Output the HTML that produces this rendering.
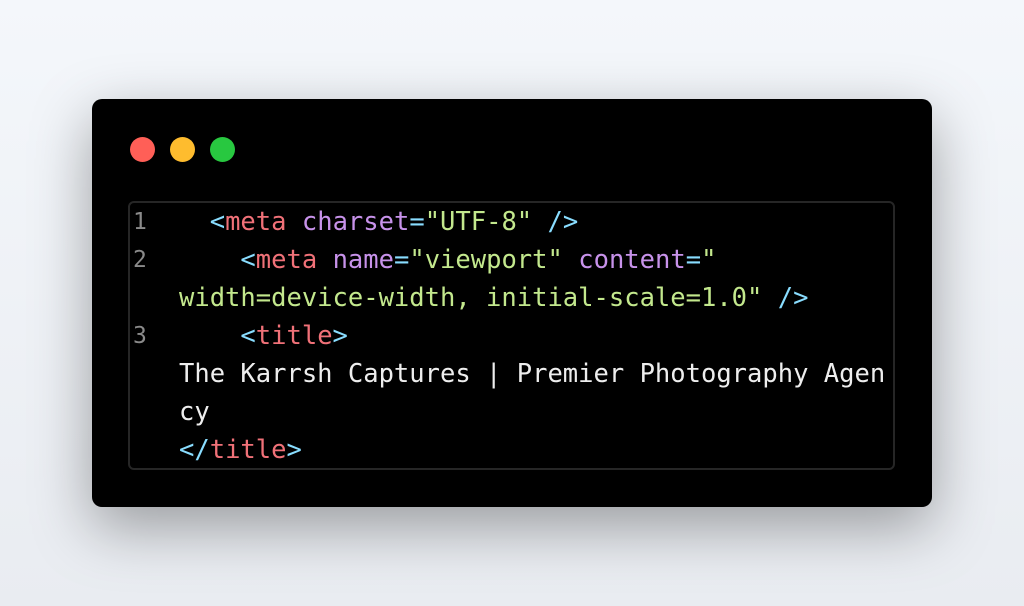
<!DOCTYPE html>
<html><head><style>
html,body{margin:0;padding:0;width:1024px;height:606px;overflow:hidden;background:linear-gradient(180deg,#f4f7fb,#e9ecf1);}
.card{position:absolute;left:92px;top:99px;width:840px;height:408px;background:#000;border-radius:10px;box-shadow:0 20px 60px rgba(0,0,0,.35);}
.dot{position:absolute;top:137px;width:25px;height:25px;border-radius:50%;}
.box{position:absolute;left:128px;top:201px;width:763px;height:265px;border:2px solid #262626;border-radius:6px;background:#000;}
.code{position:absolute;left:179px;top:203px;width:712px;font-family:"DejaVu Sans Mono","Liberation Mono",monospace;font-size:25.5px;line-height:38px;color:#eeeeee;white-space:pre-wrap;word-break:break-all;margin:0;}
.ln{position:absolute;left:133px;font-family:"DejaVu Sans Mono",monospace;font-size:23px;color:#8a8a8a;line-height:38px;}
.p{color:#89ddff}.t{color:#f07178}.a{color:#c792ea}.s{color:#c3e88d}
</style></head><body>
<div class="card"></div>
<div class="dot" style="left:130px;background:#ff5f57"></div>
<div class="dot" style="left:170px;background:#febc2e"></div>
<div class="dot" style="left:210px;background:#28c840"></div>
<div class="box"></div>
<div class="ln" style="top:203px">1</div>
<div class="ln" style="top:241px">2</div>
<div class="ln" style="top:317px">3</div>
<pre class="code"><span>  </span><span class="p">&lt;</span><span class="t">meta</span> <span class="a">charset</span><span class="p">=</span><span class="s">"UTF-8"</span> <span class="p">/&gt;</span>
    <span class="p">&lt;</span><span class="t">meta</span> <span class="a">name</span><span class="p">=</span><span class="s">"viewport"</span> <span class="a">content</span><span class="p">=</span><span class="s">"</span>
<span class="s">width=device-width, initial-scale=1.0"</span> <span class="p">/&gt;</span>
    <span class="p">&lt;</span><span class="t">title</span><span class="p">&gt;</span>
The Karrsh Captures | Premier Photography Agency
<span class="p">&lt;/</span><span class="t">title</span><span class="p">&gt;</span></pre>
</body></html>
